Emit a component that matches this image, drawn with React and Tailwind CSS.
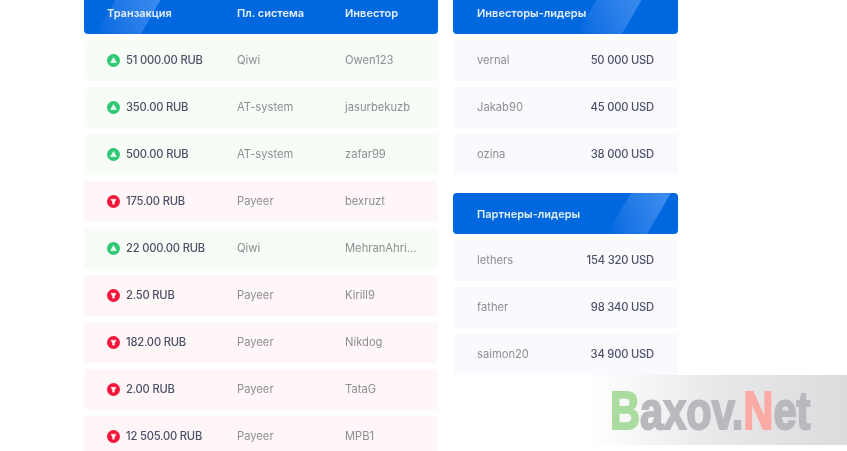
const transactions = [
  { amount: '51 000.00 RUB', system: 'Qiwi', investor: 'Owen123', up: true },
  { amount: '350.00 RUB', system: 'AT-system', investor: 'jasurbekuzb', up: true },
  { amount: '500.00 RUB', system: 'AT-system', investor: 'zafar99', up: true },
  { amount: '175.00 RUB', system: 'Payeer', investor: 'bexruzt', up: false },
  { amount: '22 000.00 RUB', system: 'Qiwi', investor: 'MehranAhri...', up: true },
  { amount: '2.50 RUB', system: 'Payeer', investor: 'Kirill9', up: false },
  { amount: '182.00 RUB', system: 'Payeer', investor: 'Nikdog', up: false },
  { amount: '2.00 RUB', system: 'Payeer', investor: 'TataG', up: false },
  { amount: '12 505.00 RUB', system: 'Payeer', investor: 'MPB1', up: false },
];

const investors = [
  { name: 'vernal', sum: '50 000 USD' },
  { name: 'Jakab90', sum: '45 000 USD' },
  { name: 'ozina', sum: '38 000 USD' },
];

const partners = [
  { name: 'lethers', sum: '154 320 USD' },
  { name: 'father', sum: '98 340 USD' },
  { name: 'saimon20', sum: '34 900 USD' },
];

function ArrowIcon({ up }) {
  return (
    <svg width="13" height="13" viewBox="0 0 13 13" className="shrink-0">
      <circle cx="6.5" cy="6.5" r="6.5" fill={up ? '#2ec774' : '#f5163c'} />
      {up ? (
        <path d="M6.5 3.6 9.3 8.6H3.7Z" fill="#e9fbf0" stroke="#e9fbf0" strokeWidth="0.8" strokeLinejoin="round" />
      ) : (
        <path d="M3.9 4.2H9.1L7.4 7.2V9.2H5.6V7.2Z" fill="#fff" stroke="#fff" strokeWidth="0.4" strokeLinejoin="round" />
      )}
    </svg>
  );
}

function Gloss({ className }) {
  return (
    <div className={`absolute top-0 h-full skew-x-[-30deg] bg-gradient-to-tr from-[#0068df] to-[#3f8ff0] ${className}`} />
  );
}

function LeaderRow({ name, sum }) {
  return (
    <div className="flex h-[41px] items-center justify-between rounded bg-[#fafafe] px-6">
      <span className="text-[11.2px] text-[#8e8e92]">{name}</span>
      <span className="text-[11.2px] font-medium tracking-[-0.2px] text-[#4c5068]">{sum}</span>
    </div>
  );
}

export default function App() {
  return (
    <div className="relative h-screen overflow-hidden bg-white font-['Inter',sans-serif] blur-[0.4px]">
      <div className="ml-[84px] -mt-2 flex items-start gap-[15px]">
        <div className="flex w-[354px] flex-col gap-1.5">
          <div className="relative grid h-[42px] grid-cols-[130px_108px_1fr] items-center overflow-hidden rounded bg-[#0068df] pl-[23px] text-[11px] font-semibold text-[#e4effc]">
            <Gloss className="left-[24px] w-[45px]" />
            <span className="relative">Транзакция</span>
            <span className="relative">Пл. система</span>
            <span className="relative">Инвестор</span>
          </div>
          {transactions.map((t) => (
            <div
              key={t.amount + t.investor}
              className={`grid h-[41px] grid-cols-[130px_108px_1fr] items-center rounded pl-[23px] ${t.up ? 'bg-[#f7fcf6]' : 'bg-[#fef6f7]'}`}
            >
              <span className="flex items-center gap-1.5 text-[11.2px] font-medium tracking-[-0.2px] text-[#4c5068]">
                <ArrowIcon up={t.up} />
                {t.amount}
              </span>
              <span className="text-[11.2px] text-[#8e8e92]">{t.system}</span>
              <span className="text-[11.2px] text-[#8e8e92]">{t.investor}</span>
            </div>
          ))}
        </div>

        <div className="flex w-[225px] flex-col gap-1.5">
          <div className="relative flex h-[42px] items-center overflow-hidden rounded bg-[#0068df] pl-6 text-[11px] font-semibold text-[#e4effc]">
            <Gloss className="left-[136px] w-[45px]" />
            <span className="relative">Инвесторы-лидеры</span>
          </div>
          {investors.map((r) => (
            <LeaderRow key={r.name} {...r} />
          ))}
          <div className="relative mt-3 flex h-[41px] items-center overflow-hidden rounded bg-[#0068df] pl-6 pt-px text-[11px] font-semibold text-[#e4effc]">
            <Gloss className="left-[166px] w-[40px]" />
            <span className="relative">Партнеры-лидеры</span>
          </div>
          {partners.map((r) => (
            <LeaderRow key={r.name} {...r} />
          ))}
        </div>
      </div>

      <div className="absolute right-0 top-[375px] flex h-[70px] w-[257px] items-center overflow-hidden bg-gradient-to-r from-white via-[#e8e8ea] to-[#dcdcde] pl-5">
        <span className="origin-left scale-x-[0.785] whitespace-nowrap font-['Liberation_Sans',sans-serif] text-[53px] font-bold leading-none text-[#b9b9bd] [-webkit-text-stroke:2px_currentColor]">
          <span className="text-[#a9dc9e]">B</span>axov.<span className="text-[#fbaaa4]">N</span>et
        </span>
      </div>
    </div>
  );
}
